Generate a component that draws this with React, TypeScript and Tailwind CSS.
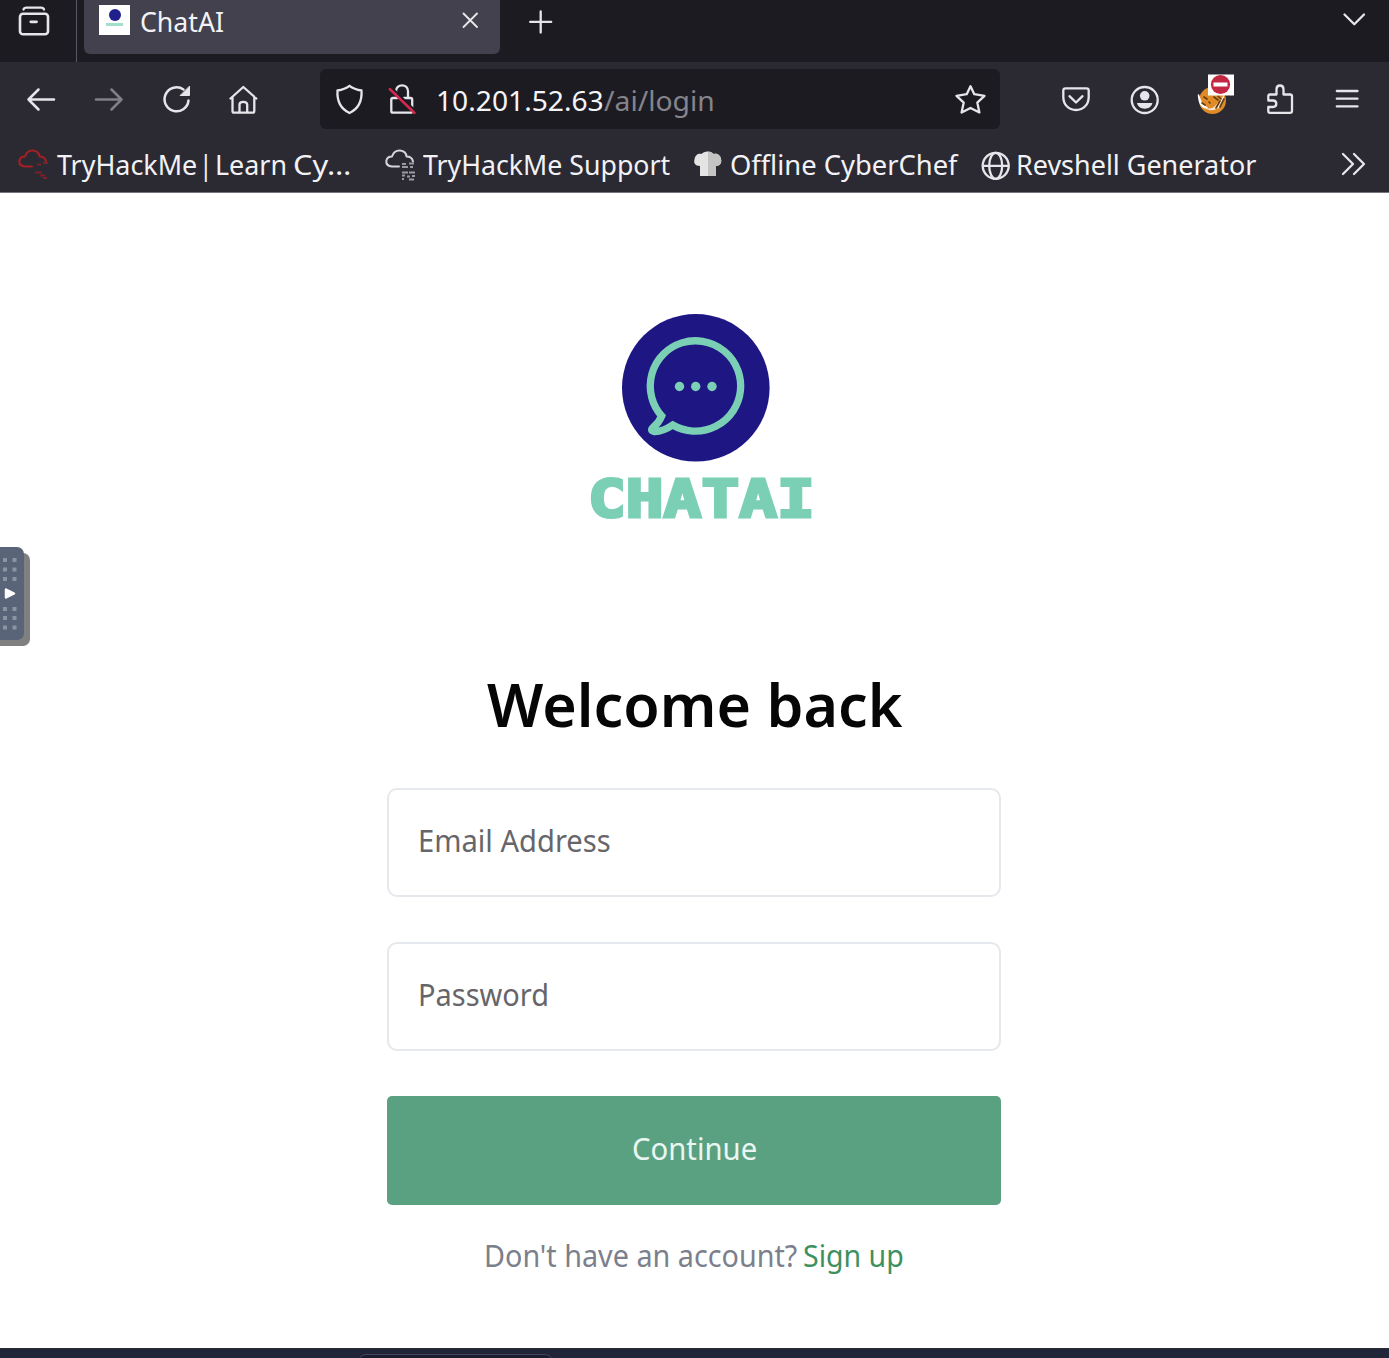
import { useLayoutEffect, useRef, useState } from "react";
import type { ReactNode } from "react";

/** Single line of text stretched or condensed horizontally to a given width. */
function Fit({ width, className = "", children }: { width: number; className?: string; children: ReactNode }) {
  const ref = useRef<HTMLSpanElement>(null);
  const [scale, setScale] = useState(1);
  useLayoutEffect(() => {
    if (ref.current) setScale(width / ref.current.offsetWidth);
  }, [width]);
  return (
    <span className={`block shrink-0 whitespace-nowrap ${className}`} style={{ width }}>
      <span ref={ref} className="inline-block origin-left" style={{ transform: `scaleX(${scale})` }}>
        {children}
      </span>
    </span>
  );
}

function Icon({ className = "", children, w = 32 }: { className?: string; children: ReactNode; w?: number }) {
  return (
    <svg
      className={`shrink-0 overflow-visible ${className}`}
      width={w}
      height={32}
      viewBox={`0 0 ${w} 32`}
      fill="none"
      stroke="#e6e6ea"
      strokeWidth={2.3}
      strokeLinecap="round"
      strokeLinejoin="round"
    >
      {children}
    </svg>
  );
}

function TabBar() {
  return (
    <div className="flex h-[62px] items-start bg-[#1c1b22]">
      <div className="flex h-[62px] w-[77px] shrink-0 border-r border-[#5a5962] pl-[18px] pt-[5px]">
        <Icon>
          <path d="M5.500 4.500Q6 2.600 8.500 2.600H23Q25.500 2.600 26 4.500" />
          <rect x="2" y="8.800" width="28" height="20.500" rx="3" strokeWidth="2.600" />
          <path d="M12.800 16.800H18.500" strokeWidth="2.800" />
        </Icon>
      </div>
      <div className="ml-[7px] flex h-[54px] w-[416px] shrink-0 items-start rounded-b-md bg-[#42414d] pl-[15px]">
        <div className="mt-[5px] flex h-[30px] w-[31px] shrink-0 flex-col items-center bg-white pt-[4px]">
          <div className="h-[12px] w-[12px] rounded-full bg-[#20208c]" />
          <div className="mt-[2px] h-[3px] w-[17px] bg-[#a4dfcd]" />
        </div>
        <Fit width={84} className="ml-[10px] mt-px text-[27px] leading-[42px] text-[#f2f2f6]">ChatAI</Fit>
        <Icon className="ml-[230px] mt-[4px]">
          <path d="M9.500 9.500l13.500 13.500M23 9.500L9.500 23" strokeWidth="1.900" />
        </Icon>
      </div>
      <Icon className="ml-[24px] mt-[6px]">
        <path d="M16.700 5.500v21M6.200 15.900h21" />
      </Icon>
      <Icon className="ml-auto mr-[19px] mt-[4px]">
        <path d="M6.500 10.500l9.800 9.800 9.700-9.800" />
      </Icon>
    </div>
  );
}

function UrlBar() {
  return (
    <div className="ml-[61px] flex h-[60px] w-[680px] shrink-0 items-center rounded-md bg-[#1c1b22]">
      <Icon className="ml-[14px]">
        <path d="M15.500 2.800C12 5.500 8 6.800 3.500 7.500C2.900 17 6 25.500 15.500 30C25 25.500 28.100 17 27.500 7.500C23 6.800 19 5.500 15.500 2.800Z" />
      </Icon>
      <Icon className="ml-[21px]">
        <path d="M9 10V8.200C9 4.600 11.700 2.300 15 2.300s6 2.300 6 5.900V15M10.500 15H6Q4.300 15 4.300 16.700V28Q4.300 29.700 6 29.700H23.500Q25.200 29.700 25.200 28V16.700Q25.200 15 23.500 15H17" />
        <path d="M4.500 4.500L29 28.500" stroke="#1c1b22" strokeWidth="2.400" />
        <path d="M2.800 6L27.500 30" stroke="#d7264c" strokeWidth="2.500" />
      </Icon>
      <Fit width={168} className="ml-[17px] mt-[5px] text-[26.500px] text-[#f5f5f9]">10.201.52.63</Fit>
      <Fit width={111} className="mt-[5px] text-[26.500px] text-[#85848c]">/ai/login</Fit>
      <Icon className="ml-auto mr-[14px]">
        <path d="M16.500 3.200L20.300 11.200L30.500 12.800L23.300 19.600L25.400 29.500L16.500 25L7.600 29.500L9.700 19.600L2.500 12.800L12.700 11.200Z" />
      </Icon>
    </div>
  );
}

function Toolbar() {
  return (
    <div className="flex h-[74px] items-center pl-[25px]">
      <Icon>
        <path d="M29 16.500H3.500M13.500 6.500L3.500 16.500L13.500 26.500" strokeWidth="2.500" />
      </Icon>
      <Icon className="ml-[36px]">
        <path d="M3 16.500H28.500M18.500 6.500L28.500 16.500L18.500 26.500" stroke="#81808a" strokeWidth="2.500" />
      </Icon>
      <Icon className="ml-[36px]">
        <path d="M27.500 17.500A12 12 0 1 1 22.500 6.500" strokeWidth="2.500" />
        <path d="M28.500 3.500V12.500H19.500Z" fill="#e6e6ea" strokeWidth="1" />
      </Icon>
      <Icon className="ml-[34px]">
        <path d="M3.500 15.500L16.300 4L29.300 15.500M5.500 14V28Q5.500 29.700 7.200 29.700H25.500Q27.300 29.700 27.300 28V14" />
        <path d="M12.500 29V21.500Q12.500 18.800 16.300 18.800T20.200 21.500V29" />
      </Icon>
      <UrlBar />
      <Icon className="ml-[60px]">
        <path d="M5.500 5.300H26.500Q28.700 5.300 28.700 7.500V14C28.700 21.500 23.500 27 16 27S3.300 21.500 3.300 14V7.500Q3.300 5.300 5.500 5.300Z" />
        <path d="M9.500 13.200L16 19.500L22.500 13.200" />
      </Icon>
      <Icon className="ml-[37px]">
        <circle cx="15.700" cy="17" r="13" />
        <circle cx="15.700" cy="12.800" r="4.800" fill="#e6e6ea" stroke="none" />
        <path d="M8 20H23.400C22.500 24 19.500 25.700 15.700 25.700S9 24 8 20Z" fill="#e6e6ea" stroke="none" />
      </Icon>
      <Icon className="ml-[36px]" w={40}>
        <circle cx="15.500" cy="17.500" r="13.500" fill="#e08a28" stroke="none" />
        <path d="M1.500 12C4 20 5 22 10 25C5 25 2 20 1.500 12Z" fill="#fff" stroke="#fff" strokeWidth="1.500" />
        <path d="M8 24Q14 28 19 22L27 12Q28 20 22 25Q12 30 8 24Z" fill="#f6e6cf" stroke="none" />
        <path d="M7 14l3 2M12 19l1 1M17 14l4 3M21 13l3 3M5 20l3 2M19 25l4-7M23 24l4-8" stroke="#69400f" strokeWidth="1.700" />
        <rect x="11" y="-8.500" width="26" height="21" fill="#fff" stroke="none" />
        <circle cx="23.500" cy="1.500" r="9.600" fill="#c32842" stroke="none" />
        <rect x="16.500" y="-0.500" width="14" height="4" fill="#fff" stroke="none" />
      </Icon>
      <Icon className="ml-[27px]">
        <path d="M6 11.500H12.500V6.200Q12.500 2.500 16 2.500T19.500 6.200V11.500H26Q28 11.500 28 13.500V28Q28 29.800 26 29.800H6Q4.300 29.800 4.300 28V24H9Q12.300 24 12.300 20.800T9 17.500H4.300V13.300Q4.300 11.500 6 11.500Z" />
      </Icon>
      <Icon className="ml-[35px]">
        <path d="M5.800 8H26.500M5.800 15.700H26.500M5.800 23.400H26.500" />
      </Icon>
    </div>
  );
}

function Cloud({ color, glitch, bottom }: { color: string; glitch: string; bottom: string }) {
  return (
    <Icon>
      <path
        d="M15 18.500H8Q2 18 2.300 13Q3 8.500 8 8.500Q10 2.200 16 2.500Q22 3 22.500 8.500Q28 8.500 29 13.500"
        stroke={color}
        strokeWidth="2"
      />
      <path d={bottom} stroke={glitch} strokeWidth="2" strokeLinecap="butt" />
    </Icon>
  );
}

function Bookmarks() {
  return (
    <div className="flex h-[56px] items-center pl-[17px] text-[26.500px] text-[#f2f2f6]">
      <Cloud color="#a51f25" glitch="#7a2028" bottom="M20 16.500h4M26 15h5M18 24.500h7M23 27.500h5M26 30h4" />
      <div className="ml-[8px] mt-[3px] flex w-[295px] shrink-0">
        <Fit width={140}>TryHackMe</Fit>
        <Fit width={14} className="ml-[2px]">|</Fit>
        <Fit width={72} className="ml-[2px]">Learn</Fit>
        <Fit width={58} className="ml-[6px]">Cy…</Fit>
      </div>
      <div className="ml-[32px] flex">
        <Cloud
          color="#d5d5da"
          glitch="#9b9aa2"
          bottom="M18 16h4M25 15.500h5M18 19h6M26 19h3M18 24.500h6M18 27.500h3M18 31h2M25 24.500h6M23 28.500h3M28 28h3M25 31.500h5"
        />
      </div>
      <Fit width={247} className="ml-[7px] mt-[3px]">TryHackMe Support</Fit>
      <Icon className="ml-[22px]">
        <path
          d="M8 28V18C3 18 1.500 15 2.500 11.500C3 7 6.500 5 9.500 6C12 2.500 19 2.500 21.500 6C25 5 28.500 7 29 11C30 15 28 18 24 18V28Z"
          fill="#e4e4e4"
          stroke="none"
        />
        <path d="M16 3.500C19 3.500 20.500 4.500 21.500 6C25 5 28.500 7 29 11C30 15 28 18 24 18V28H16Z" fill="#c4c4c4" stroke="none" />
      </Icon>
      <Fit width={227} className="ml-[6px] mt-[3px]">Offline CyberChef</Fit>
      <Icon className="ml-[23px]">
        <circle cx="15.700" cy="17.800" r="13" />
        <ellipse cx="15.700" cy="17.800" rx="6.500" ry="13" />
        <path d="M3 17.800H28.500" />
      </Icon>
      <Fit width={240} className="ml-[4px] mt-[3px]">Revshell Generator</Fit>
      <Icon className="ml-auto mr-[19px]">
        <path d="M5 6L15 16L5 26M16 6L26 16L16 26" />
      </Icon>
    </div>
  );
}

function Logo() {
  return (
    <div className="flex flex-col items-center">
      <svg width="148" height="148" viewBox="622 314 148 148" className="ml-[3px]">
        <circle cx="695.800" cy="387.800" r="73.800" fill="#1e1783" />
        <path
          d="M661.700 416A45.200 45.200 0 1 1 672.700 425C666 429.500 660 431.800 654 431.500Q649.500 430.500 653.500 427C658 423.500 660 420 661.700 416Z"
          fill="none"
          stroke="#7acfb4"
          strokeWidth="7.300"
        />
        <g fill="#7acfb4">
          <circle cx="679.500" cy="386.500" r="4.700" />
          <circle cx="695.700" cy="386.500" r="4.700" />
          <circle cx="712" cy="386.500" r="4.700" />
        </g>
      </svg>
      <Fit
        width={227}
        className="ml-[14px] mt-[12px] font-['DejaVu_Sans_Mono'] text-[52px] font-bold leading-[50px] text-[#7acfb4] [-webkit-text-stroke:3px_#7acfb4]"
      >
        CHATAI
      </Fit>
    </div>
  );
}

function Field({ label, width }: { label: string; width: number }) {
  return (
    <div className="flex h-[109px] items-center rounded-[10px] border-2 border-[#e5e8ec] pb-[4px] pl-[29px] text-[30.500px] text-[#66666a]">
      <Fit width={width}>{label}</Fit>
    </div>
  );
}

function SideHandle() {
  return (
    <div className="absolute left-0 top-[547px] h-[93px] w-[24px] rounded-r-[7px] bg-[#596478] shadow-[6px_6px_0_#808080,0_6px_0_#808080]">
      <svg width="24" height="93" viewBox="0 0 24 93">
        <g fill="#8a94a3">
          {[11, 20.5, 30, 60, 69, 78.5].map((y) => (
            <g key={y}>
              <rect x="3" y={y} width="4" height="4" />
              <rect x="12.500" y={y} width="4" height="4" />
            </g>
          ))}
        </g>
        <path d="M6 42.500L14 46.500L6 50.500Z" fill="#fff" stroke="#fff" strokeWidth="2.500" strokeLinejoin="round" />
      </svg>
    </div>
  );
}

export default function App() {
  return (
    <div className="relative flex h-[1358px] w-[1389px] flex-col overflow-hidden bg-white font-['Noto_Sans',sans-serif]">
      <TabBar />
      <div className="h-[131px] shrink-0 border-b border-[#77767e] bg-[#2b2a33]">
        <Toolbar />
        <Bookmarks />
      </div>
      <main className="flex flex-1 flex-col items-center pt-[121px]">
        <Logo />
        <Fit width={416} className="mt-[135px] text-[60px] font-semibold leading-[90px] text-[#060606]">
          Welcome back
        </Fit>
        <div className="mr-px mt-[39px] flex w-[614px] flex-col gap-[45px]">
          <Field label="Email Address" width={193} />
          <Field label="Password" width={131} />
          <button className="flex h-[109px] items-center justify-center rounded-[5px] bg-[#5aa182] pb-[4px] text-[30px] text-[#eaf7f1]">
            <Fit width={125}>Continue</Fit>
          </button>
        </div>
        <div className="mr-px mt-[27px] flex items-center gap-[6px] text-[30.500px] leading-[46px]">
          <Fit width={313} className="text-[#7b808c]">Don't have an account?</Fit>
          <Fit width={101} className="text-[#3f905f]">Sign up</Fit>
        </div>
      </main>
      <footer className="h-[10px] shrink-0 overflow-hidden border-t border-[#2c2e35] bg-[#202538] pl-[358px]">
        <div className="mt-[5px] h-[30px] w-[195px] rounded-[8px] border border-[#41465c] bg-[#191d2e]" />
      </footer>
      <SideHandle />
    </div>
  );
}
